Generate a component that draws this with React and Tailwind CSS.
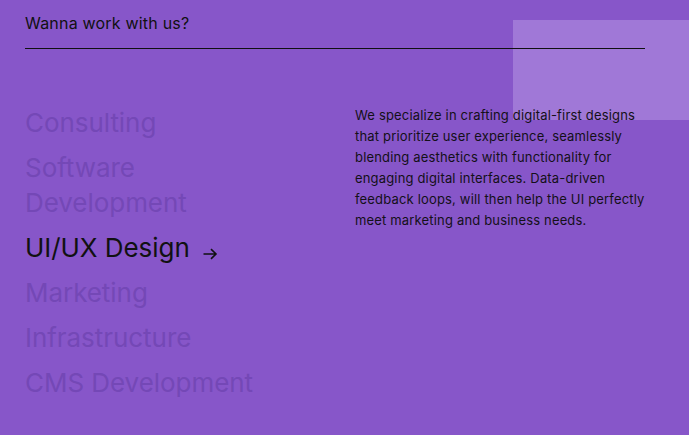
import React from "react";

const services = [
  { label: "Consulting" },
  { label: "Software Development", lines: ["Software", "Development"] },
  { label: "UI/UX Design", active: true },
  { label: "Marketing" },
  { label: "Infrastructure" },
  { label: "CMS Development" },
];

export default function App() {
  return (
    <div
      className="relative w-[689px] h-[435px] overflow-hidden bg-[#8756c9]"
      style={{ fontFamily: "Inter, 'Noto Sans', sans-serif" }}
    >
      <div className="absolute left-[513px] top-[20px] w-[176px] h-[100px] bg-[#a078d7]" />
      <div className="relative px-[25px] pt-[11px]">
        <div className="w-[620px] border-b border-[#111] pb-[13px]">
          <p className="text-[16px] leading-[24px] tracking-[0.2px] text-[#111]">Wanna work with us?</p>
        </div>
        <div className="flex pt-[56px]">
          <ul className="w-[330px] flex flex-col gap-[10px]">
            {services.map((s) => (
              <li
                key={s.label}
                className={`text-[26px] leading-[35px] tracking-[-0.05px] ${
                  s.active ? "text-[#111] flex items-center" : "text-[#7448b6]"
                }`}
              >
                {s.lines ? (
                  <>
                    {s.lines[0]}
                    <br />
                    {s.lines[1]}
                  </>
                ) : (
                  s.label
                )}
                {s.active && (
                  <svg
                    width="16"
                    height="16"
                    viewBox="0 0 16 16"
                    className="ml-[12px] mt-[13px]"
                    fill="none"
                    stroke="#111"
                    strokeWidth="1.6"
                  >
                    <path d="M1.5 8h12.5M9 3.2l5 4.8-5 4.8" />
                  </svg>
                )}
              </li>
            ))}
          </ul>
          <p className="w-[292px] text-[13px] leading-[21px] tracking-[0.17px] text-[#141018]">
            We specialize in crafting digital-first designs that prioritize user experience, seamlessly
            blending aesthetics with functionality for engaging digital interfaces. Data-driven feedback
            loops, will then help the UI perfectly meet marketing and business needs.
          </p>
        </div>
      </div>
    </div>
  );
}
